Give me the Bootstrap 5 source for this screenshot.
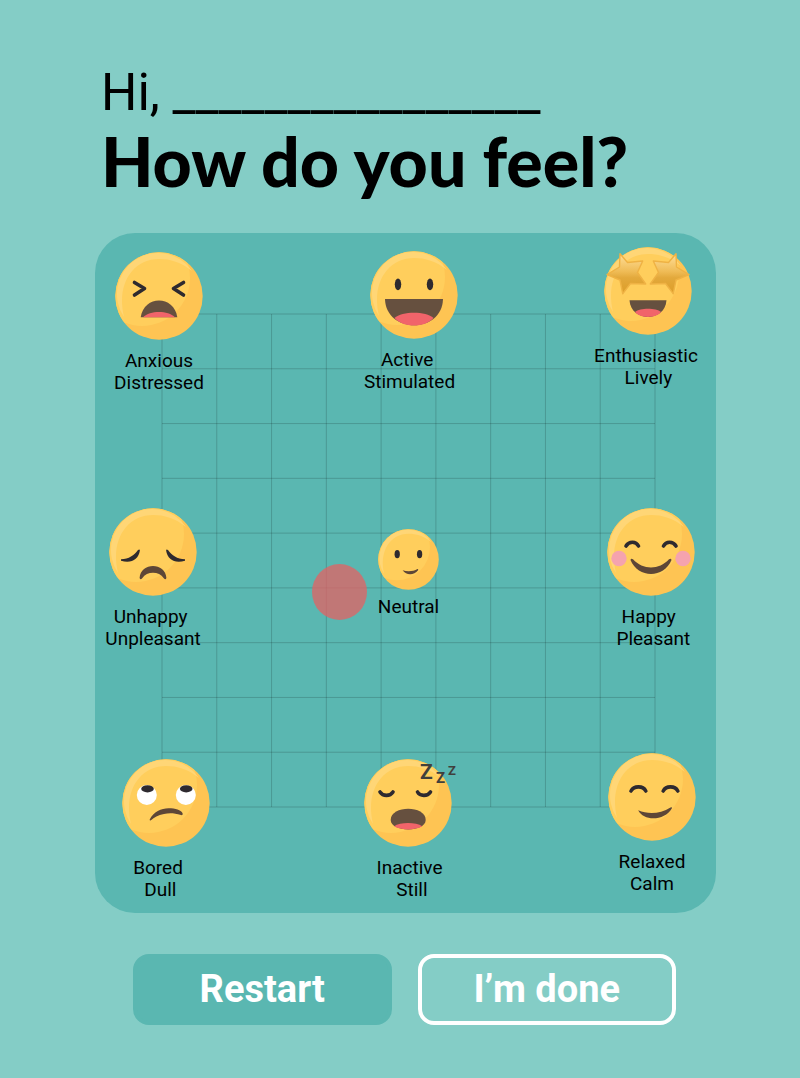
<!DOCTYPE html>
<html lang="en">
<head>
<meta charset="utf-8">
<meta name="viewport" content="width=device-width, initial-scale=1">
<title>How do you feel?</title>
<link href="https://cdn.jsdelivr.net/npm/bootstrap@5.3.0/dist/css/bootstrap.min.css" rel="stylesheet">
<style>
  :root { --mist: #84cdc6; --teal: #5ab7b1; }
  body { background: var(--mist); color: #000; font-family: Roboto, "Liberation Sans", sans-serif; }
  .feel-page { padding: 61px 84px 52px 95px; }
  .feel-head { padding-left: 6px; margin-bottom: 36px; }
  .hello { font-size: 51px; line-height: 64px; white-space: nowrap; }
  .question { font-family: Lato, "Liberation Sans", sans-serif; font-weight: 900; font-size: 68px; line-height: 72px; white-space: nowrap; }

  /* mood map: left-right is pleasantness, up-down is energy */
  .mood-map { height: 680px; background: var(--teal); border-radius: 40px; }
  .mood-lines { position: absolute; top: 81px; right: 61px; bottom: 106px; left: 67px; }
  .mood-lines svg { display: block; width: 100%; height: 100%; overflow: visible; }
  .mood-pin { position: absolute; width: 110px; font-size: 19px; line-height: 22px; text-align: center; }
  .mood-face { width: 88px; height: 88px; overflow: visible; }
  .mood-face-sm { width: 61px; height: 61px; overflow: visible; }
  .mood-label { padding-top: 10px; white-space: nowrap; }
  .mood-label-sm { padding-top: 6px; }
  .at-anxious { left: 9px; top: 19px; }
  .at-active { left: calc(50% - 47px); top: 18px; }
  .at-lively { right: 13px; top: 14px; }
  .at-unhappy { left: 3px; top: 275px; }
  .at-neutral { left: calc(50% - 52px); top: 296px; }
  .at-happy { right: 10px; top: 275px; }
  .at-bored { left: 16px; top: 526px; }
  .at-still { left: calc(50% - 53px); top: 526px; }
  .at-calm { right: 9px; top: 520px; }
  .mood-marker { position: absolute; left: 35%; top: 331px; width: 55px; height: 56px; background: rgba(228, 97, 99, .75); }

  .feel-actions { padding: 41px 40px 0 38px; gap: 26px; }
  .feel-btn { flex: 1 1 0; height: 71px; padding: 0 0 2px; border: 4px solid var(--teal); border-radius: 16px; font-size: 38px; font-weight: 700; line-height: 1; color: #fff; background: var(--teal); }
  .feel-btn:hover { color: #fff; border-color: #fff; }
  .feel-btn-line { border-color: #fff; background: transparent; }
  .ink { fill: none; stroke: #2e2a2f; stroke-width: 3.6; stroke-linecap: round; stroke-linejoin: round; }
  .eye { fill: #2e2a2f; }
  .mouth { fill: #66503f; }
  .lip { fill: #5d4637; }
  .tongue { fill: #f1646a; }
  .snore { fill: #40403c; font-weight: 700; }
</style>
</head>
<body>
<svg width="0" height="0" class="position-absolute" aria-hidden="true">
  <defs>
    <clipPath id="disc"><circle r="43.7"/></clipPath>
    <linearGradient id="gold" x1="0" y1="0" x2="0" y2="1">
      <stop offset="0" stop-color="#ffdf9a"/><stop offset=".45" stop-color="#efbb55"/><stop offset=".6" stop-color="#e3a93c"/><stop offset="1" stop-color="#dc9d28"/>
    </linearGradient>
    <g id="head">
      <circle r="43.7" fill="#fec453"/>
      <circle cx="-17" cy="-18" r="48" fill="#ffce5c" clip-path="url(#disc)"/>
      <path d="M-35 21A41 41 0 0 1 33 -25C22 -34 11 -37 0 -37C-26 -37 -43 -12 -35 21Z" fill="#ffd676"/>
    </g>
    <path id="star" d="M-28 -37.3L-20.5 -28.5L-5.3 -30L-10.5 -18.5L-2.3 -7L-17.5 -7.5L-25.3 2.7L-28 -11L-41 -16.3L-28.5 -24Z" fill="url(#gold)" stroke="#efb244" stroke-width="1.4" stroke-linejoin="round"/>
  </defs>
</svg>

<main class="feel-page">
  <header class="feel-head">
    <p class="hello mb-0">Hi, ________________</p>
    <h1 class="question mb-0">How do you feel?</h1>
  </header>

  <section class="mood-map position-relative" aria-label="Mood map">
    <div class="mood-lines">
      <svg viewBox="0 0 9 9" preserveAspectRatio="none" aria-hidden="true">
        <path d="M0 0V9M1 0V9M2 0V9M3 0V9M4 0V9M5 0V9M6 0V9M7 0V9M8 0V9M9 0V9M0 0H9M0 1H9M0 2H9M0 3H9M0 4H9M0 5H9M0 6H9M0 7H9M0 8H9M0 9H9" fill="none" stroke="#000" stroke-opacity=".17" vector-effect="non-scaling-stroke"/>
      </svg>
    </div>

    <div class="mood-pin at-anxious d-flex flex-column align-items-center">
      <svg class="mood-face" viewBox="-44 -44 88 88" aria-hidden="true"><use href="#head"/>
        <path class="ink" d="M-24.5 -13.5L-14.5 -7.5L-24.5 -1M24.5 -13.5L14.5 -7.5L24.5 -1"/>
        <path class="mouth" d="M-18.3 21.3C-15 -1 15 -1 18.3 21.3Z"/>
        <path class="tongue" d="M-16 21.3C-9 14.3 9 14.3 16 21.3Z"/>
      </svg>
      <div class="mood-label">Anxious<br>Distressed</div>
    </div>

    <div class="mood-pin at-active d-flex flex-column align-items-center">
      <svg class="mood-face" viewBox="-44 -44 88 88" aria-hidden="true"><use href="#head"/>
        <ellipse class="eye" cx="-16" cy="-10.7" rx="3.2" ry="5.9"/><ellipse class="eye" cx="16" cy="-10.7" rx="3.2" ry="5.9"/>
        <path class="mouth" d="M-29 4H29C28 39 -28 39 -29 4Z"/>
        <path class="tongue" d="M-19.5 23C-12 16 12 16 19.5 23C11 33 -11 33 -19.5 23Z"/>
      </svg>
      <div class="mood-label pe-2">Active&nbsp;<br>Stimulated</div>
    </div>

    <div class="mood-pin at-lively d-flex flex-column align-items-center">
      <svg class="mood-face" viewBox="-44 -44 88 88" aria-hidden="true"><use href="#head"/>
        <use href="#star"/><use href="#star" transform="scale(-1 1)"/>
        <path class="mouth" d="M-18.5 9.3H18.5C17 31.5 -17 31.5 -18.5 9.3Z"/>
        <path class="tongue" d="M-13 21C-8 16.7 8 16.7 13 21C8 27.6 -8 27.6 -13 21Z"/>
      </svg>
      <div class="mood-label pe-1">Enthusiastic<br>&nbsp;Lively</div>
    </div>

    <div class="mood-pin at-unhappy d-flex flex-column align-items-center">
      <svg class="mood-face" viewBox="-44 -44 88 88" aria-hidden="true"><use href="#head"/>
        <path class="eye" d="M-32 7.2C-24 7 -19 3.5 -15 -2Q-13.3 -3.4 -13.1 -1.5C-14.5 7.5 -22 12 -32 8.7Z"/>
        <path class="eye" d="M32 7.2C24 7 19 3.5 15 -2Q13.3 -3.4 13.1 -1.5C14.5 7.5 22 12 32 8.7Z"/>
        <path class="lip" d="M-13.4 26C-12.5 10 12.5 10 13.4 26Q12.6 28.2 10.8 26.3C6 19 -6 19 -10.8 26.3Q-12.6 28.2 -13.4 26Z"/>
      </svg>
      <div class="mood-label">Unhappy&nbsp;<br>Unpleasant</div>
    </div>

    <button type="button" class="mood-marker btn rounded-circle border-0 p-0" aria-label="Your mood"></button>

    <div class="mood-pin at-neutral d-flex flex-column align-items-center">
      <svg class="mood-face-sm" viewBox="-44 -44 88 88" aria-hidden="true"><use href="#head"/>
        <ellipse class="eye" cx="-16.3" cy="-7.7" rx="3.8" ry="5.9"/><ellipse class="eye" cx="16" cy="-7.7" rx="3.8" ry="5.9"/>
        <path class="lip" d="M-8.5 15.5C-2 18 7 17.5 13 13.8Q14.5 13.5 13.8 15.5C8 23 -3 23.5 -8.5 15.5Z"/>
      </svg>
      <div class="mood-label mood-label-sm">Neutral</div>
    </div>

    <div class="mood-pin at-happy d-flex flex-column align-items-center">
      <svg class="mood-face" viewBox="-44 -44 88 88" aria-hidden="true"><use href="#head"/>
        <path class="ink" d="M-25 -6C-22 -11 -15 -11 -12.5 -6M12.5 -6C15 -11 22 -11 25 -6"/>
        <circle cx="-32" cy="6.5" r="7.7" fill="#f5a3ae"/><circle cx="32" cy="6.5" r="7.7" fill="#f5a3ae"/>
        <path class="lip" d="M-20.5 8Q-20 5.8 -18 7.3C-8 18.3 8 18.3 18 7.3Q20 5.8 20.5 8C13 26.5 -13 26.5 -20.5 8Z"/>
      </svg>
      <div class="mood-label">Happy&nbsp;<br>&nbsp;Pleasant</div>
    </div>

    <div class="mood-pin at-bored d-flex flex-column align-items-center">
      <svg class="mood-face" viewBox="-44 -44 88 88" aria-hidden="true"><use href="#head"/>
        <circle cx="-19.2" cy="-8" r="10" fill="#fff"/><circle cx="19.8" cy="-8" r="10" fill="#fff"/>
        <ellipse class="eye" cx="-18.5" cy="-14.2" rx="6.3" ry="3.6"/><ellipse class="eye" cx="20.2" cy="-14.2" rx="6.3" ry="3.6"/>
        <path class="lip" d="M-16.3 16.5C-12 7.5 -3 4.5 5 5.3C12 5.8 16 8 16.8 11Q16.6 12.6 15 12C8 10 3 10 -2 11C-8 12 -12 14.5 -15 17.3Q-16.5 17.8 -16.3 16.5Z"/>
      </svg>
      <div class="mood-label pe-3">Bored<br>&nbsp;Dull</div>
    </div>

    <div class="mood-pin at-still d-flex flex-column align-items-center">
      <svg class="mood-face" viewBox="-44 -44 88 88" aria-hidden="true"><use href="#head"/>
        <path class="ink" d="M-28 -11C-25 -6.5 -18 -6.5 -15 -11M9.5 -11C12 -6.5 19.5 -6.5 22.5 -11"/>
        <path class="mouth" d="M-17.3 17C-17.3 2 17.7 2 17.7 17C17.7 29.5 -17.3 29.5 -17.3 17Z"/>
        <path class="tongue" d="M-13.8 23.3C-8 19 8 19 14.2 23.3C7 27.5 -7 27.5 -13.8 23.3Z"/>
        <g class="snore"><text x="12" y="-24" font-size="21">Z</text><text x="28" y="-20" font-size="15">Z</text><text x="40" y="-28" font-size="13">Z</text></g>
      </svg>
      <div class="mood-label ps-1">Inactive<br>&nbsp;Still</div>
    </div>

    <div class="mood-pin at-calm d-flex flex-column align-items-center">
      <svg class="mood-face" viewBox="-44 -44 88 88" aria-hidden="true"><use href="#head"/>
        <path class="ink" d="M-21 -6C-18 -11.5 -9 -11.5 -6.2 -6M11.2 -6C14 -11.5 23 -11.5 25.8 -6"/>
        <path class="lip" d="M-13.8 13.2C-4 17.5 8 17 18.5 10.5Q20.5 9.5 19.8 11.5C13 23.5 -8 25 -13.8 13.2Z"/>
      </svg>
      <div class="mood-label">Relaxed<br>Calm</div>
    </div>
  </section>

  <div class="feel-actions d-flex">
    <button type="button" class="btn feel-btn">Restart</button>
    <button type="button" class="btn feel-btn feel-btn-line">I’m done</button>
  </div>
</main>
<script src="https://cdn.jsdelivr.net/npm/bootstrap@5.3.0/dist/js/bootstrap.bundle.min.js"></script>
</body>
</html>
